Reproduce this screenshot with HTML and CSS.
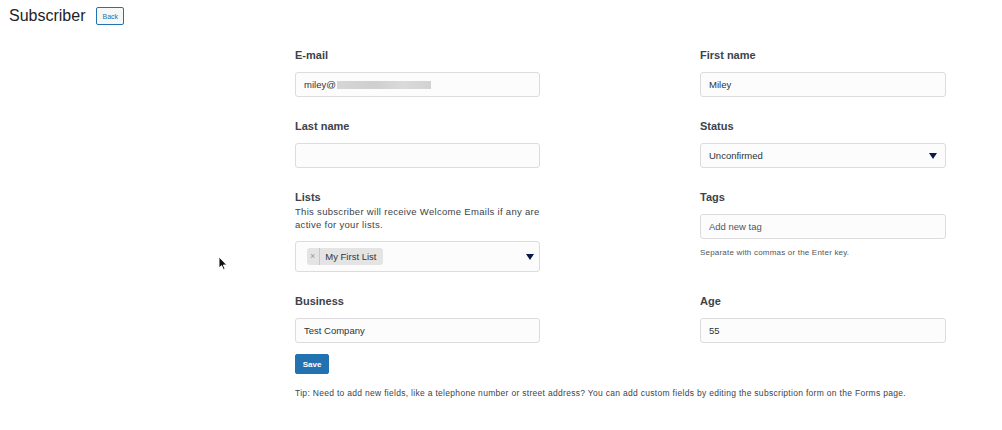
FILE: index.html
```html
<!DOCTYPE html>
<html>
<head>
<meta charset="utf-8">
<link rel="stylesheet" href="styles.css">
</head>
<body>
<div class="header">
  <h1 class="title">Subscriber</h1>
  <button class="back">Back</button>
</div>
<form class="form">
  <div class="grid">
    <div class="field">
      <label class="label">E-mail</label>
      <div class="input"><span>miley@</span><span class="blur"></span></div>
    </div>
    <div class="field">
      <label class="label">First name</label>
      <div class="input">Miley</div>
    </div>
    <div class="field">
      <label class="label">Last name</label>
      <div class="input"></div>
    </div>
    <div class="field">
      <label class="label">Status</label>
      <div class="input select">Unconfirmed<span class="arrow"></span></div>
    </div>
    <div class="field">
      <label class="label">Lists</label>
      <p class="desc">This subscriber will receive Welcome Emails if any are active for your lists.</p>
      <div class="input multi">
        <span class="chip"><span class="chip-x">×</span><span class="chip-t">My First List</span></span>
        <span class="arrow"></span>
      </div>
    </div>
    <div class="field">
      <label class="label">Tags</label>
      <div class="input placeholder">Add new tag</div>
      <p class="help">Separate with commas or the Enter key.</p>
    </div>
    <div class="field">
      <label class="label">Business</label>
      <div class="input">Test Company</div>
    </div>
    <div class="field">
      <label class="label">Age</label>
      <div class="input">55</div>
    </div>
  </div>
  <button class="save" type="button">Save</button>
  <p class="tip">Tip: Need to add new fields, like a telephone number or street address? You can add custom fields by editing the subscription form on the Forms page.</p>
</form>
<svg class="cursor" width="10" height="15" viewBox="0 0 10 15"><path d="M1 1 L1 12 L3.6 9.6 L5.4 13.6 L7 12.9 L5.3 9 L8.8 9 Z" fill="#111" stroke="#fff" stroke-width="0.9"/></svg>
</body>
</html>
```
FILE: styles.css
```css
* { box-sizing: border-box; }
body {
  margin: 0;
  background: #fff;
  font-family: "Liberation Sans", Arial, Helvetica, sans-serif;
  color: #3c434a;
  position: relative;
}
.header {
  display: flex;
  align-items: center;
  gap: 11px;
  padding: 7px 9px 0;
  height: 25px;
}
.title {
  margin: 0;
  font-size: 16px;
  font-weight: 400;
  color: #1d2327;
}
.back {
  height: 18px;
  padding: 0 5px;
  font: 7px "Liberation Sans", Arial, sans-serif;
  color: #2271b1;
  background: #f6f7f7;
  border: 1px solid #2271b1;
  border-radius: 2px;
}
.form {
  margin-left: 295px;
  width: 651px;
  padding-top: 23px;
}
.grid {
  display: grid;
  grid-template-columns: 245px 246px;
  column-gap: 160px;
  row-gap: 22px;
}
.field { display: flex; flex-direction: column; }
.label {
  font-size: 11px;
  line-height: 14px;
  font-weight: 600;
  color: #3c434a;
  margin-bottom: 10px;
}
.desc {
  margin: -9px 0 10px;
  font-size: 9.5px;
  letter-spacing: 0.3px;
  line-height: 13px;
  color: #3c434a;
}
.input {
  height: 25px;
  border: 1px solid #dcdcde;
  border-radius: 3px;
  background: #fdfcfd;
  display: flex;
  align-items: center;
  padding: 0 8px;
  font-size: 9.5px;
  color: #2c3338;
  position: relative;
}
.placeholder { color: #50575e; }
.blur {
  display: inline-block;
  width: 94px;
  height: 8px;
  background: linear-gradient(90deg, #d6d6d6, #cfcfcf 40%, #dadada 70%, #d2d2d2);
  margin-left: 1px;
}
.select { justify-content: space-between; padding-right: 8px; }
.arrow {
  width: 0;
  height: 0;
  border-left: 4px solid transparent;
  border-right: 4px solid transparent;
  border-top: 6px solid #0c1a4a;
}
.multi {
  height: 31px;
  padding: 0 5px 0 11px;
  justify-content: space-between;
}
.chip {
  display: flex;
  align-items: center;
  height: 17px;
  background: #e4e4e4;
  border-radius: 3px;
  font-size: 9.5px;
  color: #333;
}
.chip-x {
  color: #999;
  font-size: 9px;
  padding: 0 4px 0 3px;
  border-right: 1px solid #c8c8c8;
  line-height: 17px;
}
.chip-t { padding: 0 7px 0 5px; }
.help {
  margin: 9px 0 0;
  font-size: 8px;
  letter-spacing: 0.2px;
  line-height: 10px;
  color: #50575e;
}
.save {
  margin-top: 11px;
  height: 20px;
  width: 34px;
  padding: 0;
  background: #2271b1;
  color: #fff;
  border: 1px solid #2271b1;
  border-radius: 2px;
  font: 600 8px "Liberation Sans", Arial, sans-serif;
}
.tip {
  margin: 13px 0 0;
  font-size: 8.5px;
  letter-spacing: 0.3px;
  line-height: 12px;
  color: #3c434a;
  white-space: nowrap;
}
.cursor {
  position: absolute;
  left: 218px;
  top: 256px;
}
```
